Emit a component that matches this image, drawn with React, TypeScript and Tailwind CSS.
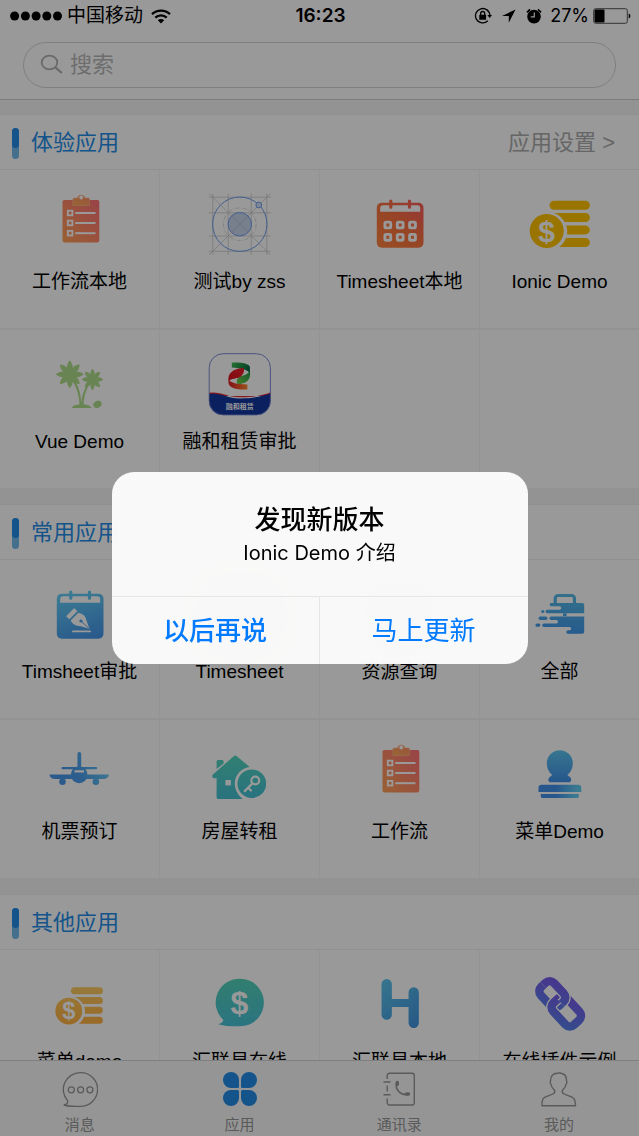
import React from "react";

const LATIN = "font-['Liberation_Sans','Noto_Sans_CJK_SC',sans-serif]";
const SYSTEM = "font-['Inter','Noto_Sans_CJK_SC',sans-serif]";

type GradientProps = { id: string; from: string; to: string; x1?: string; y1?: string; x2?: string; y2?: string };

function Gradient({ id, from, to, x1 = "0", y1 = "1", x2 = "1", y2 = "0" }: GradientProps) {
  return (
    <linearGradient id={id} x1={x1} y1={y1} x2={x2} y2={y2}>
      <stop offset="0" stopColor={from} />
      <stop offset="1" stopColor={to} />
    </linearGradient>
  );
}

function IconBox({ children }: { children: React.ReactNode }) {
  return (
    <svg viewBox="0 0 64 64" className="size-16 shrink-0" fill="none" aria-hidden="true">
      {children}
    </svg>
  );
}

function ClipboardIcon({ id }: { id: string }) {
  return (
    <IconBox>
      <defs>
        <Gradient id={id} from="#ffa055" to="#ff7078" />
        <Gradient id={id + "c"} from="#ffaa58" to="#ff8a68" />
      </defs>
      <rect x="14.5" y="8" width="36.8" height="42.4" rx="1.8" fill={`url(#${id})`} />
      <path
        d="M26.3 6h3.2a3.8 3.8 0 0 1 7.4 0h3.2a1.5 1.5 0 0 1 1.5 1.5v6.2H24.8V7.5A1.5 1.5 0 0 1 26.3 6z"
        fill={`url(#${id}c)`}
        stroke="#fbb98c"
        strokeWidth=".6"
      />
      <circle cx="33.2" cy="5.5" r="1.9" fill="#fff" />
      {[21, 31, 41.2].map((y) => (
        <g key={y} stroke="#fff">
          <rect x="19.8" y={y - 2.3} width="4.6" height="4.6" strokeWidth="1.9" />
          <path d={`M27.2 ${y}h20.3`} strokeWidth="2" />
        </g>
      ))}
    </IconBox>
  );
}

function BlueprintIcon() {
  return (
    <IconBox>
      <g stroke="#cccccc" strokeWidth=".8">
        {[4.8, 20.2, 43.2, 58.8].map((x) => (
          <path key={x} d={`M${x} 1.5V63`} />
        ))}
        {[5.2, 20.8, 44, 59.3].map((y) => (
          <path key={y} d={`M.8 ${y}H62.8`} />
        ))}
        <path d="M1 1.5 62.6 63M62.6 1.5 1 63" />
        <circle cx="31.8" cy="32.2" r="16.3" strokeDasharray="4 1.5 1 1.5" />
      </g>
      <circle cx="31.8" cy="32.2" r="27.2" stroke="#6f9ff0" strokeWidth="1" />
      <circle cx="31.8" cy="32.2" r="11.7" fill="#c8d4ec" stroke="#6f9ff0" strokeWidth="1" />
      <path d="m23.6 24 16.4 16.4M40 24 23.6 40.4" stroke="#a9b8d4" strokeWidth=".7" />
      <circle cx="50.8" cy="13" r="2.9" fill="#d3e0f8" stroke="#6f9ff0" strokeWidth="1" />
    </IconBox>
  );
}

function CalendarFrame({ fill }: { fill: string }) {
  return (
    <>
      <rect x="8.8" y="10.7" width="46.7" height="45" rx="5" fill={fill} />
      <path d="M12.2 19.8v-3.6a3 3 0 0 1 3-3h34a3 3 0 0 1 3 3v3.6z" fill="#fff" />
      <path d="M22.8 9.2v6M41.5 9.2v6" stroke={fill} strokeWidth="3.2" strokeLinecap="round" />
    </>
  );
}

function CalendarIcon({ id }: { id: string }) {
  return (
    <IconBox>
      <defs>
        <linearGradient id={id} gradientUnits="userSpaceOnUse" x1="10" y1="56" x2="54" y2="10">
          <stop offset="0" stopColor="#ff8440" />
          <stop offset=".5" stopColor="#fa733e" />
          <stop offset="1" stopColor="#fa5c5c" />
        </linearGradient>
      </defs>
      <CalendarFrame fill={`url(#${id})`} />
      {[33, 45.3].map((y) =>
        [19.8, 32.2, 44.5].map((x) => (
          <rect key={`${x}-${y}`} x={x - 2.9} y={y - 2.9} width="5.8" height="5.8" rx="1.2" stroke="#fff" strokeWidth="2.9" />
        )),
      )}
    </IconBox>
  );
}

function ApprovalIcon() {
  return (
    <IconBox>
      <defs>
        <linearGradient id="approve" gradientUnits="userSpaceOnUse" x1="24" y1="10" x2="38" y2="56">
          <stop offset="0" stopColor="#62ccf4" />
          <stop offset="1" stopColor="#4696ea" />
        </linearGradient>
      </defs>
      <g transform="translate(0 1)">
        <CalendarFrame fill="url(#approve)" />
        <path d="M18.6 32.7 25.5 25.7a1 1 0 0 1 1.4 0l2.5 2.6-8 8-2.8-2.5a.8.8 0 0 1 0-1.1z" fill="#fff" />
        <path d="m22.8 37.3 7.6-7.5c4.6 1 7.3 3 8 7.8l3.2 8.400-8.800-2.700c-5.300-.5-8.600-2-10-6z" fill="#fff" />
        <path d="m41 45.500-7.800-7.300" stroke="#4a9dec" strokeWidth=".9" />
        <circle cx="33" cy="38" r="1.600" fill="#4a9dec" />
        <path d="M25 48.400h17" stroke="#fff" strokeWidth="1.900" strokeLinecap="round" />
      </g>
    </IconBox>
  );
}

function Coins({ fill }: { fill: string }) {
  return (
    <>
      <g fill={fill}>
        <rect x="21.500" y="8.700" width="40.400" height="9" rx="4.500" />
        <path d="M26 21h31.400a4.500 4.500 0 0 1 0 9H36.600C34.500 26 31 22.800 26 21z" />
        <path d="M38.200 33.600h19.200a4.400 4.400 0 0 1 0 8.800H39.100c.3-3 .1-6-.9-8.800z" />
        <path d="M37.900 46h19.500a4.500 4.500 0 0 1 0 9H31.300c3-2.300 5.300-5.300 6.600-9z" />
        <circle cx="18.700" cy="39" r="17" />
      </g>
      <text x="18.700" y="49.500" textAnchor="middle" className={`${LATIN} text-[30px] font-bold`} fill="#fff">
        $
      </text>
    </>
  );
}

function CoinsIcon() {
  return (
    <IconBox>
      <Coins fill="#ffc300" />
    </IconBox>
  );
}

function SmallCoinsIcon() {
  return (
    <IconBox>
      <defs>
        <linearGradient id="coins" gradientUnits="userSpaceOnUse" x1="30" y1="56" x2="30" y2="8">
          <stop offset="0" stopColor="#ffb040" />
          <stop offset="1" stopColor="#fbcb62" />
        </linearGradient>
      </defs>
      <g transform="translate(6 8.300) scale(.79)">
        <Coins fill="url(#coins)" />
      </g>
    </IconBox>
  );
}

function Leaves({ cx, cy, r }: { cx: number; cy: number; r: number }) {
  return (
    <g transform={`translate(${cx} ${cy}) scale(${r / 14})`} fill="#b0dc8a">
      {[0, 45, 90, 135, 180, 225, 270, 315].map((a) => (
        <path key={a} transform={`rotate(${a})`} d="M0 0C-3-3-4.600-9 0-14 4.600-9 3-3 0 0z" />
      ))}
      <circle r="3.500" />
    </g>
  );
}

function PalmIcon() {
  return (
    <IconBox>
      <Leaves cx={21.800} cy={22.300} r={14} />
      <Leaves cx={44.500} cy={27.500} r={10.800} />
      <path d="M24 25.500c6 6 8.700 15 9.200 25 1-9 4-16 9-21.500l1.200.8C38.500 36 36 44 35.500 52c2.500.8 7 1.500 8.500 4H24c.8-2.600 4-3.200 7.500-3.700C31 42 28 33 22.500 27z" fill="#b0dc8a" />
      <ellipse cx="49.500" cy="52.300" rx="4.300" ry="3.500" transform="rotate(-30 49.500 52.300)" fill="#b0dc8a" />
    </IconBox>
  );
}

function LeasingIcon() {
  return (
    <IconBox>
      <defs>
        <clipPath id="leasingClip">
          <rect x="1" y="1.500" width="61.500" height="61.500" rx="14" />
        </clipPath>
        <Gradient id="ribbonTop" from="#3cc050" to="#0b6a44" x1="0" y1="0" x2="1" y2=".5" />
        <Gradient id="ribbonSide" from="#7ad048" to="#1d9a48" />
        <Gradient id="ribbonRed" from="#d81020" to="#f0202a" />
        <Gradient id="ribbonTail" from="#e01822" to="#ff8a30" x1="0" y1="0" x2="1" y2="0" />
      </defs>
      <g clipPath="url(#leasingClip)">
        <rect width="64" height="64" fill="#fff" />
        <path d="M0 41c12-2.500 19 4 31 4.200C44 45.400 53 44 64 40v4H0z" fill="#e02a38" />
        <path d="M0 42.200c12-2.500 19 4 31 4.200 13 .2 22-1.600 33-5.400V64H0z" fill="#12369e" />
      </g>
      <rect x="1.200" y="1.700" width="61.200" height="61.200" rx="14" stroke="#6f80d0" strokeWidth=".9" />
      <path d="M41.900 19c.8 7-.5 12-12.400 13.500C28 30 28.500 27 31.500 24.500c4-.5 8.500-2.500 10.400-5.500z" fill="url(#ribbonSide)" />
      <path d="M23.800 10.700c9-.6 16.700.8 18.100 4v6.500c-2-3.600-9-5-18.100-5.700z" fill="url(#ribbonTop)" />
      <path d="M35.500 16c-9 .3-14.600 4.500-15 9.500v3.500c3-2.600 8.200-2 12.500-4.500 2-2.500 4-5 2.500-8.500z" fill="url(#ribbonRed)" />
      <path d="M20.500 26.500c.8 4.600 9 6 18.900 5.900v5.100c-10 .4-18.900-1.400-18.900-7z" fill="url(#ribbonTail)" />
      <text x="31.800" y="57" textAnchor="middle" className={`${LATIN} text-[7px] font-bold`} fill="#fff">
        融和租赁
      </text>
    </IconBox>
  );
}

function ResourceIcon() {
  return (
    <IconBox>
      <circle cx="29" cy="29" r="16" stroke="#ef5b78" strokeWidth="8" />
      <path d="m42 42 12 12" stroke="#ef5b78" strokeWidth="8" strokeLinecap="round" />
    </IconBox>
  );
}

function SuitcaseIcon() {
  return (
    <IconBox>
      <defs>
        <linearGradient id="case" gradientUnits="userSpaceOnUse" x1="36" y1="12" x2="32" y2="52">
          <stop offset="0" stopColor="#56bce6" />
          <stop offset="1" stopColor="#3f96ec" />
        </linearGradient>
      </defs>
      <g fill="url(#case)">
        <path d="M27.200 22v-5.500a3 3 0 0 1 3-3h13.300a3 3 0 0 1 3 3V22" fill="none" stroke="url(#case)" strokeWidth="3.200" />
        <path d="M23 21h31.200a2 2 0 0 1 2 2v8.300H19.300a1.700 1.700 0 0 1 0-3.500H31.500a1.700 1.700 0 0 0 0-3.500H23A1.700 1.700 0 0 1 23 21z" />
        <path d="M23.200 34.400h33v15.300a2 2 0 0 1-2 2H40a1.700 1.700 0 0 1 0-3.400h1.500a1.700 1.700 0 0 0 0-3.400H16a1.700 1.700 0 0 1 0-3.500h12.300a1.700 1.700 0 0 0 0-3.400h-5.100a1.800 1.800 0 0 1 0-3.600z" />
        <rect x="13.200" y="27.900" width="3.200" height="3.200" rx="1.600" />
        <rect x="10.600" y="34.500" width="8.800" height="3.400" rx="1.700" />
        <rect x="7.400" y="41.400" width="5" height="3.400" rx="1.700" />
        <rect x="35" y="31.300" width="3.600" height="2.800" />
      </g>
    </IconBox>
  );
}

function PlaneIcon() {
  return (
    <IconBox>
      <defs>
        <linearGradient id="plane" gradientUnits="userSpaceOnUse" x1="2" y1="40" x2="60" y2="24">
          <stop offset="0" stopColor="#4794ea" />
          <stop offset=".5" stopColor="#4c9dec" />
          <stop offset="1" stopColor="#62c6f2" />
        </linearGradient>
      </defs>
      <g fill="url(#plane)">
        <rect x="29.500" y="10" width="3.700" height="20" rx="1.800" />
        <rect x="13.500" y="25" width="35.700" height="2.200" rx="1" />
        <circle cx="31.200" cy="32.800" r="8.400" />
        <path d="M1.500 32.500h59.400c-.2 2.800-2.400 4.500-5.400 4.600h-48.600c-3-.1-5.200-1.800-5.400-4.600z" />
        <circle cx="14.500" cy="39.800" r="3.300" />
        <circle cx="47.900" cy="39.800" r="3.300" />
      </g>
      <rect x="26.300" y="28.200" width="9.900" height="2.200" rx="1" fill="#fff" />
    </IconBox>
  );
}

function HouseIcon() {
  return (
    <IconBox>
      <defs>
        <linearGradient id="house" gradientUnits="userSpaceOnUse" x1="30" y1="14" x2="32" y2="58">
          <stop offset="0" stopColor="#52d4be" />
          <stop offset="1" stopColor="#44bfd4" />
        </linearGradient>
      </defs>
      <g fill="url(#house)">
        <path d="M8.600 27V19.500a1.500 1.500 0 0 1 1.500-1.500h4a1.500 1.500 0 0 1 1.500 1.500v2z" />
        <path d="M26 14.100a2 2 0 0 1 2.500 0L41.800 25c-8.200.8-15 7.700-15 16.600 0 6.200 3 11.600 8 15.400H10a1.400 1.400 0 0 1-1.400-1.400V36c-2.500.7-4.400.2-4.400-1.800 0-1 .5-1.700 1.200-2.300z" />
        <circle cx="43.800" cy="41.700" r="14.300" />
      </g>
      <rect x="17.500" y="38" width="5.400" height="5.400" fill="#fff" />
      <g stroke="#fff" strokeWidth="2.200" strokeLinecap="round">
        <circle cx="47.300" cy="38.500" r="3.900" />
        <path d="m44.400 41.400-7.700 7.700M40.200 45.700l2.800 2.800" />
      </g>
    </IconBox>
  );
}

function StampIcon() {
  return (
    <IconBox>
      <defs>
        <Gradient id="stampTop" from="#4090ea" to="#5cc4ee" x1="0" y1="1" x2="0" y2="0" />
        <Gradient id="stampBase" from="#4090ea" to="#62ccf0" x1=".4" y1="0" x2=".9" y2="0" />
      </defs>
      <path d="M24.200 33C20.500 29.700 18.800 26 18.800 21.300a13 13 0 0 1 26 0c0 4.700-1.700 8.400-5.400 11.700l3 2.600c1.600 1.700.8 4.700-1.600 4.700h-18c-2.400 0-3.200-3-1.600-4.700z" fill="url(#stampTop)" />
      <path d="M13.500 42.700h36.800a3 3 0 0 1 3 3V50H10.500v-4.300a3 3 0 0 1 3-3z" fill="url(#stampBase)" />
      <path d="M12.800 52h38v2.600a1.400 1.400 0 0 1-1.400 1.400H14.200a1.400 1.400 0 0 1-1.400-1.400z" fill="url(#stampBase)" />
    </IconBox>
  );
}

function DollarBubbleIcon() {
  return (
    <IconBox>
      <defs>
        <Gradient id="bubble" from="#48c2d8" to="#54d2b8" x1="0" y1="1" x2="0" y2="0" />
      </defs>
      <path d="M32.200 6.800a23.700 23.700 0 0 1 0 47.400c-7.500.2-15 0-21.800-2 2.300-.8 4.600-1.700 5-4.200A23.700 23.700 0 0 1 32.200 6.800z" fill="url(#bubble)" />
      <text x="31.500" y="42" textAnchor="middle" className={`${LATIN} text-[32px] font-bold`} fill="#fff">
        $
      </text>
    </IconBox>
  );
}

function HIcon() {
  return (
    <IconBox>
      <defs>
        <linearGradient id="hbars" gradientUnits="userSpaceOnUse" x1="14" y1="8" x2="50" y2="56">
          <stop offset="0" stopColor="#5cc4ec" />
          <stop offset="1" stopColor="#4092de" />
        </linearGradient>
      </defs>
      <path d="M18.700 12.200v30.300M45.700 20.500v30.300" stroke="url(#hbars)" strokeWidth="10.300" strokeLinecap="round" />
      <path d="M22 27h20.500v8H22z" fill="url(#hbars)" />
    </IconBox>
  );
}

function LinkIcon() {
  const upper = { x: -13, y: -9, width: 26, height: 18, rx: 6, transform: "translate(24.300 22.300) rotate(47)" };
  const lower = { x: -15, y: -9.5, width: 30, height: 19, rx: 6, transform: "translate(38.300 39.500) rotate(47)" };
  return (
    <IconBox>
      <defs>
        <linearGradient id="link" gradientUnits="userSpaceOnUse" x1="-6" y1="-16" x2="10" y2="14">
          <stop offset="0" stopColor="#7a58ec" />
          <stop offset="1" stopColor="#5880ec" />
        </linearGradient>
        <clipPath id="linkSide">
          <path d="M0-2 64-2V62z" />
        </clipPath>
      </defs>
      <rect {...upper} stroke="url(#link)" strokeWidth="8.500" />
      <rect {...lower} stroke="#fff" strokeWidth="11" />
      <rect {...lower} stroke="url(#link)" strokeWidth="8.500" />
      <g clipPath="url(#linkSide)">
        <rect {...upper} stroke="#fff" strokeWidth="11" />
        <rect {...upper} stroke="url(#link)" strokeWidth="8.500" />
      </g>
    </IconBox>
  );
}

type AppEntry = { name: string; icon: React.ReactNode } | null;

const sections: { title: string; settings?: boolean; apps: AppEntry[] }[] = [
  {
    title: "体验应用",
    settings: true,
    apps: [
      { name: "工作流本地", icon: <ClipboardIcon id="clipA" /> },
      { name: "测试by zss", icon: <BlueprintIcon /> },
      { name: "Timesheet本地", icon: <CalendarIcon id="calA" /> },
      { name: "Ionic Demo", icon: <CoinsIcon /> },
      { name: "Vue Demo", icon: <PalmIcon /> },
      { name: "融和租赁审批", icon: <LeasingIcon /> },
      null,
      null,
    ],
  },
  {
    title: "常用应用",
    apps: [
      { name: "Timsheet审批", icon: <ApprovalIcon /> },
      { name: "Timesheet", icon: <CalendarIcon id="calB" /> },
      { name: "资源查询", icon: <ResourceIcon /> },
      { name: "全部", icon: <SuitcaseIcon /> },
      { name: "机票预订", icon: <PlaneIcon /> },
      { name: "房屋转租", icon: <HouseIcon /> },
      { name: "工作流", icon: <ClipboardIcon id="clipB" /> },
      { name: "菜单Demo", icon: <StampIcon /> },
    ],
  },
  {
    title: "其他应用",
    apps: [
      { name: "菜单demo", icon: <SmallCoinsIcon /> },
      { name: "汇联易在线", icon: <DollarBubbleIcon /> },
      { name: "汇联易本地", icon: <HIcon /> },
      { name: "在线插件示例", icon: <LinkIcon /> },
    ],
  },
];

function StatusBar() {
  return (
    <div className={`flex h-8 items-center pr-2 pl-2.5 text-black ${SYSTEM}`}>
      <div className="flex flex-1 items-center">
        <svg viewBox="0 0 53 10" className="h-2.5 w-[53px]" aria-hidden="true">
          {[4.6, 15.4, 26.1, 36.8, 47.5].map((x) => (
            <circle key={x} cx={x} cy="5" r="4.500" />
          ))}
        </svg>
        <span className="ml-1 text-[19px] leading-8">中国移动</span>
        <svg viewBox="0 0 20 15" className="ml-2 h-[15px] w-5" fill="none" stroke="#000" strokeWidth="2.300" aria-hidden="true">
          <path d="M1 5.200a13 13 0 0 1 18 0" />
          <path d="M4.300 8.700a8.200 8.200 0 0 1 11.400 0" />
          <path d="M10 14.500 6.800 11.300a4.600 4.600 0 0 1 6.400 0z" fill="#000" stroke="none" />
        </svg>
      </div>
      <time className="text-[19px] leading-8 font-semibold">16:23</time>
      <div className="flex flex-1 items-center justify-end">
        <svg viewBox="0 0 18 18" className="h-[18px] w-[18px]" fill="none" stroke="#000" strokeWidth="1.300" aria-hidden="true">
          <path d="M13.800 13.800A7.200 7.200 0 1 1 15.900 8.500" />
          <path d="M13.300 8h4.700l-2.300 3z" fill="#000" stroke="none" />
          <rect x="5.300" y="7.800" width="6.800" height="5" rx=".6" fill="#000" stroke="none" />
          <path d="M6.700 8V6.500a2 2 0 0 1 4 0V8" />
        </svg>
        <svg viewBox="0 0 14 14" className="ml-2.5 size-3.5" aria-hidden="true">
          <path d="M13.500.5 0 7h6.800v6.800z" />
        </svg>
        <svg viewBox="0 0 16 16" className="ml-2.5 size-4" aria-hidden="true">
          <circle cx="8" cy="8.600" r="6.800" />
          <path d="M1 4.300 4 1.300M15 4.300 12 1.300" stroke="#000" strokeWidth="1.700" />
          <path d="M8.300 4.500v4.300H4.800" fill="none" stroke="#fff" strokeWidth="1.200" />
        </svg>
        <span className="ml-2 text-[18px] leading-8">27%</span>
        <svg viewBox="0 0 38 16" className="ml-1 h-4 w-[38px]" aria-hidden="true">
          <rect x=".7" y=".7" width="33.600" height="14.600" rx="2" fill="none" stroke="#555" strokeWidth="1" />
          <rect x="1.500" y="1.500" width="10" height="13" rx="1" />
          <path d="M35.700 5.500c2.200.8 2.200 4.200 0 5z" />
        </svg>
      </div>
    </div>
  );
}

function AppTile({ app }: { app: AppEntry }) {
  if (!app) return <div className="h-[158px] bg-white" />;
  return (
    <button type="button" className="flex h-[158px] flex-col items-center gap-3 bg-white pt-[22px]">
      {app.icon}
      <span className={`text-[19px] leading-7 whitespace-nowrap text-black ${LATIN}`}>{app.name}</span>
    </button>
  );
}

const tabs = [
  {
    label: "消息",
    icon: (
      <svg viewBox="0 0 36 36" className="size-9" fill="none" stroke="#979797" strokeWidth="1.300" aria-hidden="true">
        <path d="M18.300 1.700a16.800 16.800 0 0 1 1 33.600c-6.200.4-12 .2-17.500-1.300 2.700-.6 4.500-1.800 3.800-4.300A16.800 16.800 0 0 1 18.300 1.700z" />
        {[9.3, 18.6, 27.9].map((x) => (
          <circle key={x} cx={x} cy="18.800" r="3" />
        ))}
      </svg>
    ),
  },
  {
    label: "应用",
    icon: (
      <svg viewBox="0 0 36 36" className="size-9" fill="#228ce8" aria-hidden="true">
        {[0, 90, 180, 270].map((a) => (
          <path key={a} transform={`rotate(${a} 18 18)`} d="M9 1a8 8 0 0 1 8 8v6.500a1.500 1.500 0 0 1-1.500 1.500H9A8 8 0 0 1 9 1z" />
        ))}
      </svg>
    ),
  },
  {
    label: "通讯录",
    icon: (
      <svg viewBox="0 0 36 36" className="size-9" fill="none" stroke="#979797" strokeWidth="1.400" aria-hidden="true">
        <path d="M6.200 8V4.500A2.200 2.200 0 0 1 8.400 2.300h22.700a2.200 2.200 0 0 1 2.200 2.200v27.300a2.200 2.200 0 0 1-2.200 2.200H8.400a2.200 2.200 0 0 1-2.200-2.200V27.500M6.200 14.500v6M2.500 11h7M2.500 23.700h7" />
        <path d="M15.500 12.500c-.8 3 .1 5.500 2.200 8 2.200 2.300 5.500 3.500 9.200 3" strokeWidth="1.700" />
        <path d="M16.300 11.500v1.800M25.700 23h1.800" strokeWidth="3.400" strokeLinecap="round" />
      </svg>
    ),
  },
  {
    label: "我的",
    icon: (
      <svg viewBox="0 0 36 36" className="size-9" fill="none" stroke="#979797" strokeWidth="1.400" strokeLinejoin="round" aria-hidden="true">
        <path d="M1 34.800c0-4-.3-6.800 2.300-8.200 2.800-1.600 8-2.700 9.800-4.300 1.400-1.500.7-2.800-.6-4.200-1.600-1.600-2.300-3.200-2.600-5.100-.8-.6-1-2.800-.2-3.400-.3-5 3-7.300 6.500-7.300 1.200-.6 4-.3 5 .4 3 .6 4.400 3.300 4.200 6.900.7.700.6 2.900-.3 3.400-.3 1.900-1 3.500-2.600 5.100-1.300 1.400-2 2.700-.6 4.200 1.800 1.600 7 2.700 9.800 4.300 2.600 1.400 2.800 4.200 2.800 8.200z" />
      </svg>
    ),
  },
];

export default function App() {
  return (
    <div className={`relative flex h-screen flex-col overflow-hidden bg-[#f5f5f5] ${LATIN}`}>
      <header className="border-b border-[#cfcfcf] bg-white">
        <StatusBar />
        <div className="px-[23px] pt-2.5 pb-[11px]">
          <label className="flex h-[46px] items-center gap-1.5 rounded-full border border-[#d4d4d4] pl-4">
            <svg viewBox="0 0 24 24" className="size-6 shrink-0" fill="none" stroke="#b0b0b0" strokeWidth="1.800" aria-hidden="true">
              <ellipse cx="9.500" cy="9.500" rx="7.800" ry="6.800" />
              <path d="m15.300 14.300 6.500 5.700" strokeWidth="2.200" />
            </svg>
            <input
              type="search"
              aria-label="搜索"
              placeholder="搜索"
              className="h-full min-w-0 flex-1 bg-transparent text-[22px] outline-none placeholder:text-[#b8b8b8]"
            />
          </label>
        </div>
      </header>

      <main className="flex min-h-0 flex-1 flex-col gap-4 overflow-hidden pt-3.5">
        {sections.map((section) => (
          <section key={section.title} className="shrink-0">
            <div className="flex h-14 items-center border-y border-y-[#f1f1f1] bg-white pt-0.5 pr-6 pl-3">
              <span className="flex h-[31px] w-[7px] flex-col overflow-hidden rounded-full bg-[#72baec]">
                <span className="h-5 rounded-b-full bg-[#228ce8]" />
              </span>
              <h2 className="ml-3 flex-1 text-[22px] leading-8 font-normal text-[#228ce8]">{section.title}</h2>
              {section.settings && (
                <a href="#settings" className="text-[22px] leading-8 text-[#aaaaaa]">
                  应用设置 &gt;
                </a>
              )}
            </div>
            <div className="grid grid-cols-4 gap-x-px gap-y-0.5">
              {section.apps.map((app, i) => (
                <AppTile key={i} app={app} />
              ))}
            </div>
          </section>
        ))}
      </main>

      <nav className="grid shrink-0 grid-cols-4 border-t border-[#d4d4d4] bg-[#f8f8f8] pt-2.5 pb-px">
        {tabs.map((tab) => (
          <button key={tab.label} type="button" className="flex flex-col items-center gap-2 text-[15px] leading-5 text-[#979797]">
            {tab.icon}
            {tab.label}
          </button>
        ))}
      </nav>

      <div className="fixed inset-0 flex items-center justify-center bg-black/40">
        <div
          role="alertdialog"
          aria-modal="true"
          aria-labelledby="update-title"
          aria-describedby="update-text"
          className={`w-[416px] max-w-full overflow-hidden rounded-[22px] bg-[#fefefe]/95 text-center text-black backdrop-blur-2xl ${SYSTEM}`}
        >
          <div className="px-4 pt-[30px] pb-7">
            <h1 id="update-title" className="text-[26px] leading-9 font-medium">
              发现新版本
            </h1>
            <p id="update-text" className="text-[20px] leading-[30px]">
              Ionic Demo 介绍
            </p>
          </div>
          <div className="grid grid-cols-2 divide-x divide-[#e6e6e6] border-t border-[#e6e6e6] text-[26px] leading-9 text-[#007aff]">
            <button type="button" className="h-[67px] font-medium">
              以后再说
            </button>
            <button type="button" className="h-[67px]">
              马上更新
            </button>
          </div>
        </div>
      </div>
    </div>
  );
}
